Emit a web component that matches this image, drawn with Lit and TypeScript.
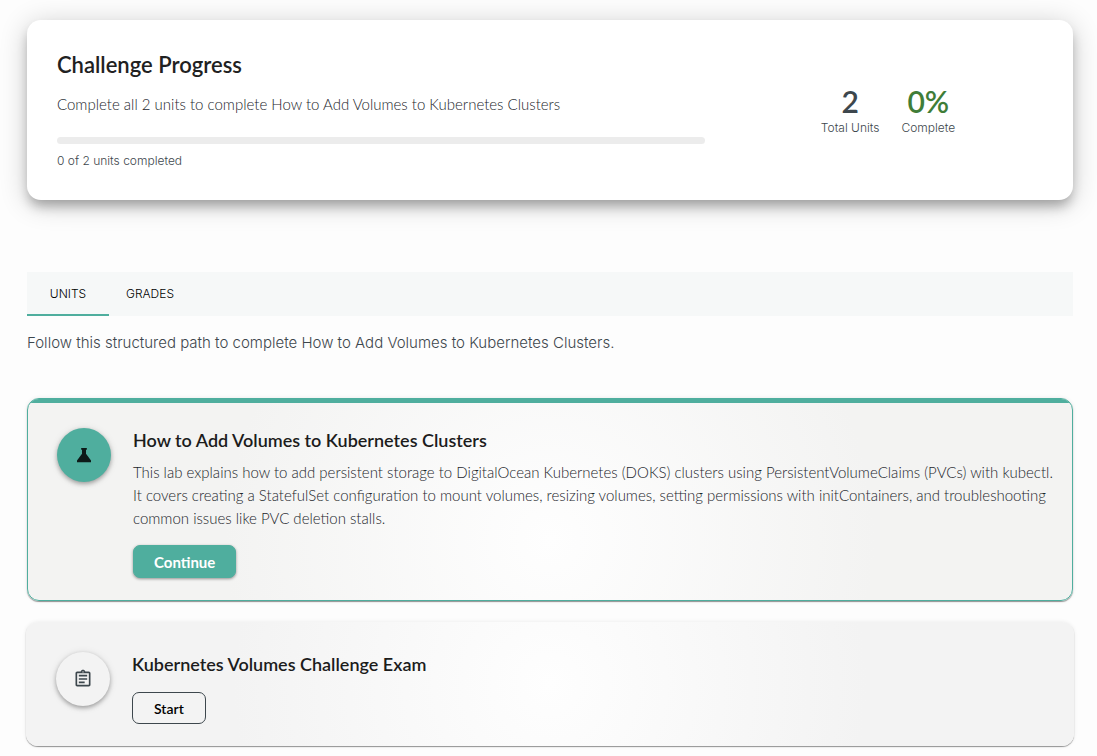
import { LitElement, html, css, svg } from "lit";
import { customElement, property, state } from "lit/decorators.js";
import { classMap } from "lit/directives/class-map.js";

interface Unit {
  title: string;
  description?: string;
  icon: "lab" | "exam";
  action: string;
  current: boolean;
}

const UNITS: Unit[] = [
  {
    title: "How to Add Volumes to Kubernetes Clusters",
    description:
      "This lab explains how to add persistent storage to DigitalOcean Kubernetes (DOKS) clusters using PersistentVolumeClaims (PVCs) with kubectl. It covers creating a StatefulSet configuration to mount volumes, resizing volumes, setting permissions with initContainers, and troubleshooting common issues like PVC deletion stalls.",
    icon: "lab",
    action: "Continue",
    current: true,
  },
  { title: "Kubernetes Volumes Challenge Exam", icon: "exam", action: "Start", current: false },
];

const ICONS = {
  lab: svg`<path d="M8.6 3.6h6.8v2h-1v4.8l6 8.2v2H3.6v-2l6-8.2V5.6h-1z"/>`,
  exam: svg`<path d="M7 15h7v2H7zm0-4h10v2H7zm0-4h10v2H7zm12-4h-4.18C14.4 1.84 13.3 1 12 1s-2.4.84-2.82 2H5c-1.1 0-2 .9-2 2v14c0 1.1.9 2 2 2h14c1.1 0 2-.9 2-2V5c0-1.1-.9-2-2-2m-7-.25c.41 0 .75.34.75.75s-.34.75-.75.75-.75-.34-.75-.75.34-.75.75-.75M19 19H5V5h14z"/>`,
};

@customElement("progress-card")
export class ProgressCard extends LitElement {
  static styles = css`
    :host {
      display: block;
    }
    .card {
      display: grid;
      grid-template-columns: repeat(12, 1fr);
      column-gap: 28px;
      align-items: center;
      padding: 30px;
      border-radius: 14px;
      background: #fff;
      box-shadow: 0 8px 12px -2px rgba(0, 0, 0, 0.28), 0 4px 28px rgba(0, 0, 0, 0.2);
    }
    .summary {
      grid-column: span 8;
    }
    .title {
      margin: 0 0 12px;
      font-family: Lato, sans-serif;
      font-size: 22px;
      line-height: 30px;
      font-weight: 600;
      color: #212121;
    }
    .text {
      margin: 0 0 21px;
      font-family: Lato, sans-serif;
      font-size: 15px;
      line-height: 24px;
      color: #1c262c;
    }
    .bar {
      height: 7px;
      border-radius: 4px;
      background: #ececec;
      overflow: hidden;
    }
    .fill {
      height: 100%;
      background: #4fae9e;
    }
    .caption {
      margin: 7px 0 0;
      font-size: 12px;
      line-height: 19px;
      color: #3d474d;
    }
    .stats {
      grid-column: span 4;
      display: flex;
      justify-content: center;
      gap: 22px;
      text-align: center;
      margin: 0;
    }
    .stat {
      display: flex;
      flex-direction: column-reverse;
    }
    .label {
      font-size: 12px;
      line-height: 19px;
      color: #3d474d;
    }
    .value {
      margin: 0;
      font-family: Lato, sans-serif;
      font-size: 30px;
      line-height: 34px;
      font-weight: 600;
      color: #3d474d;
    }
    .good {
      color: #3f7d38;
    }
  `;

  @property() name = "";
  @property({ type: Number }) total = 0;
  @property({ type: Number }) done = 0;

  render() {
    const percent = this.total ? Math.round((this.done / this.total) * 100) : 0;
    return html`
      <section class="card">
        <div class="summary">
          <h2 class="title">Challenge Progress</h2>
          <p class="text">Complete all ${this.total} units to complete ${this.name}</p>
          <div class="bar" role="progressbar" aria-label="Challenge Progress" aria-valuenow=${percent}>
            <div class="fill" style="width:${percent}%"></div>
          </div>
          <p class="caption">${this.done} of ${this.total} units completed</p>
        </div>
        <dl class="stats">
          <div class="stat">
            <dt class="label">Total Units</dt>
            <dd class="value">${this.total}</dd>
          </div>
          <div class="stat">
            <dt class="label">Complete</dt>
            <dd class="value good">${percent}%</dd>
          </div>
        </dl>
      </section>
    `;
  }
}

@customElement("unit-card")
export class UnitCard extends LitElement {
  static styles = css`
    :host {
      display: block;
    }
    .card {
      position: relative;
      display: flex;
      align-items: flex-start;
      gap: 22px;
      margin: 0 -1px;
      padding: 30px 16px 22px 30px;
      border-radius: 12px;
      overflow: hidden;
      background: radial-gradient(circle, #fefefe 0%, #f3f3f3 60%);
      box-shadow: 0 1px 1px rgba(0, 0, 0, 0.4), 0 0 4px rgba(0, 0, 0, 0.08);
    }
    .current {
      margin: 0;
      padding: 29px 15px 22px 29px;
      border: 1px solid #4fae9e;
      background: radial-gradient(circle at 50% 70%, #fefefe 0%, #f3f3f2 60%);
    }
    .current::before {
      content: "";
      position: absolute;
      inset: 0 0 auto;
      height: 4px;
      background: #4fae9e;
    }
    .badge {
      flex: none;
      display: grid;
      place-items: center;
      width: 54px;
      height: 54px;
      border-radius: 50%;
      background: #f3f3f3;
      color: #3d474d;
      box-shadow: 0 2px 4px rgba(0, 0, 0, 0.3), 0 1px 8px rgba(0, 0, 0, 0.1);
    }
    .current .badge {
      background: #4fae9e;
      color: #0d1a18;
    }
    .icon {
      width: 20px;
      height: 20px;
      fill: currentColor;
    }
    .body {
      flex: 1;
      min-width: 0;
    }
    .title {
      margin: 0;
      font-family: Lato, sans-serif;
      font-size: 18px;
      line-height: 25px;
      font-weight: 600;
      color: #1c1c1c;
    }
    .text {
      margin: 8px 0 0;
      font-family: Lato, sans-serif;
      font-size: 15px;
      line-height: 23px;
      color: #1c262c;
    }
    .action {
      display: block;
      height: 32px;
      margin-top: 15px;
      padding: 0 21px;
      border: 1px solid #3d474d;
      border-radius: 7px;
      background: transparent;
      color: #000;
      font-family: Lato, sans-serif;
      font-size: 14px;
      font-weight: 600;
      cursor: pointer;
    }
    .current .action {
      height: 33px;
      padding: 0 20px;
      border-color: #4fae9e;
      background: #4fae9e;
      color: #fff;
      font-size: 15px;
      font-weight: 700;
      box-shadow: 0 1px 3px rgba(0, 0, 0, 0.4);
    }
  `;

  @property({ attribute: false }) unit!: Unit;

  render() {
    const u = this.unit;
    return html`
      <article class=${classMap({ card: true, current: u.current })}>
        <span class="badge">
          <svg class="icon" viewBox="0 0 24 24" aria-hidden="true">${ICONS[u.icon]}</svg>
        </span>
        <div class="body">
          <h3 class="title">${u.title}</h3>
          ${u.description ? html`<p class="text">${u.description}</p>` : null}
          <button class="action" type="button">${u.action}</button>
        </div>
      </article>
    `;
  }
}

@customElement("app-root")
export class AppRoot extends LitElement {
  static styles = css`
    :host {
      display: block;
      box-sizing: border-box;
      min-height: 100vh;
      padding: 20px 24px 9px 27px;
      background: #fdfdfd;
      font-family: Inter, "Open Sans", sans-serif;
      font-weight: 300;
    }
    .tabs {
      display: flex;
      margin-top: 72px;
      background: #f6f8f8;
    }
    .tab {
      height: 44px;
      min-width: 82px;
      padding: 0 16px;
      border: 0;
      border-bottom: 2px solid transparent;
      background: none;
      color: #000;
      font: inherit;
      font-size: 12px;
      text-transform: uppercase;
      cursor: pointer;
    }
    .selected {
      border-bottom-color: #4fae9e;
    }
    .intro {
      margin: 15px 0 43px;
      font-size: 15px;
      line-height: 24px;
      color: #3d474d;
    }
    .units {
      display: flex;
      flex-direction: column;
      gap: 21px;
      margin: 0;
      padding: 0;
      list-style: none;
    }
  `;

  @state() private tab = "Units";

  render() {
    const name = "How to Add Volumes to Kubernetes Clusters";
    return html`
      <progress-card name=${name} total="2" done="0"></progress-card>
      <div class="tabs" role="tablist">
        ${["Units", "Grades"].map(
          (t) => html`<button
            class=${classMap({ tab: true, selected: t === this.tab })}
            type="button"
            role="tab"
            aria-selected=${t === this.tab}
            @click=${() => (this.tab = t)}
          >${t}</button>`
        )}
      </div>
      <p class="intro">Follow this structured path to complete ${name}.</p>
      <ul class="units">
        ${UNITS.map((u) => html`<li><unit-card .unit=${u}></unit-card></li>`)}
      </ul>
    `;
  }
}
